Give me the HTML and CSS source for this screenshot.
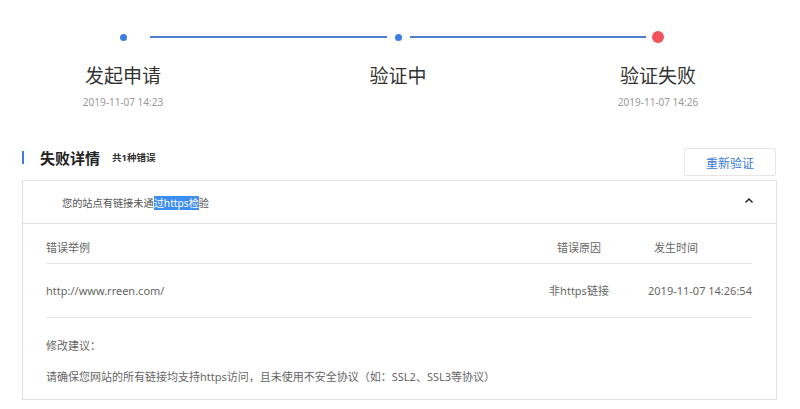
FILE: index.html
```html
<!DOCTYPE html>
<html lang="zh-CN">
<head>
<meta charset="utf-8">
<title>验证失败</title>
<link rel="stylesheet" href="styles.css">
</head>
<body>
<div class="page">
  <section class="steps">
    <div class="track">
      <span class="dot dot-first"></span>
      <span class="line line-a"></span>
      <span class="dot dot-mid"></span>
      <span class="line line-b"></span>
      <span class="dot dot-fail"></span>
    </div>
    <div class="labels">
      <div class="step step-1">
        <div class="step-title">发起申请</div>
        <div class="step-date">2019-11-07 14:23</div>
      </div>
      <div class="step step-2">
        <div class="step-title">验证中</div>
        <div class="step-date"></div>
      </div>
      <div class="step step-3">
        <div class="step-title">验证失败</div>
        <div class="step-date">2019-11-07 14:26</div>
      </div>
    </div>
  </section>

  <section class="detail-head">
    <div class="head-left">
      <span class="bar"></span>
      <span class="head-title">失败详情</span>
      <span class="head-count">共1种错误</span>
    </div>
    <button class="retry">重新验证</button>
  </section>

  <section class="card">
    <div class="card-top">
      <span class="card-msg">您的站点有链接未通<span class="sel">过https检</span>验</span>
      <svg class="chev" width="10" height="7" viewBox="0 0 10 7"><polyline points="1.5,5.5 5,2 8.5,5.5" fill="none" stroke="#222" stroke-width="1.5"/></svg>
    </div>
    <div class="card-body">
      <div class="row row-head">
        <span class="c1">错误举例</span>
        <span class="c2">错误原因</span>
        <span class="c3 c3h">发生时间</span>
      </div>
      <div class="row row-data">
        <span class="c1">http://www.rreen.com/</span>
        <span class="c2">非https链接</span>
        <span class="c3">2019-11-07 14:26:54</span>
      </div>
      <div class="advice">
        <div class="advice-title">修改建议：</div>
        <div class="advice-text">请确保您网站的所有链接均支持https访问，且未使用不安全协议（如：SSL2、SSL3等协议）</div>
      </div>
    </div>
  </section>
</div>
</body>
</html>
```
FILE: styles.css
```css
* { box-sizing: border-box; }
html, body { margin: 0; padding: 0; background: #fff; }
body {
  font-family: "Noto Sans", "Noto Sans CJK SC", sans-serif;
  color: #333;
  width: 800px;
  height: 409px;
  overflow: hidden;
}
.page { padding-top: 31px; }

.track {
  display: flex;
  align-items: center;
  height: 12px;
  padding-left: 120px;
}
.dot { display: block; border-radius: 50%; flex: none; }
.dot-first, .dot-mid { width: 7px; height: 7px; background: #3b7de3; }
.dot-fail { width: 12px; height: 12px; background: #f0545a; }
.line { display: block; height: 1.5px; background: #4f7fcf; flex: none; }
.line-a { width: 237px; margin: 0 8px 0 23px; }
.line-b { width: 236px; margin: 0 6px 0 8px; }

.labels { display: flex; margin-top: 20px; }
.step { width: 160px; text-align: center; flex: none; }
.step-1 { margin-left: 43px; }
.step-2 { margin-left: 115px; }
.step-3 { margin-left: 100px; }
.step-title { font-size: 19px; line-height: 26px; color: #333; }
.step-date { font-size: 10px; line-height: 14px; color: #999; margin-top: 6px; height: 14px; }

.detail-head {
  display: flex;
  justify-content: space-between;
  margin: 37px 24px 0 22px;
  height: 34px;
}
.head-left { display: flex; align-items: center; height: 20px; margin-top: 1px; }
.bar { width: 2px; height: 13px; background: #3b7de3; display: block; }
.head-title { font-size: 15px; font-weight: 700; margin-left: 16px; color: #222; }
.head-count { font-size: 9.5px; font-weight: 700; margin-left: 12px; color: #333; }
.retry {
  width: 92px;
  height: 28px;
  margin-top: 2px;
  background: #fff;
  border: 1px solid #e6e6e6;
  border-radius: 2px;
  color: #3a78d6;
  font-family: "Noto Sans CJK SC", sans-serif;
  font-size: 12px;
  padding: 0;
}

.card {
  margin: 0 23px 0 22px;
  border: 1px solid #e2e2e2;
}
.card-top {
  height: 43px;
  border-bottom: 1px solid #e2e2e2;
  display: flex;
  align-items: center;
  justify-content: space-between;
  padding: 0 22px 0 39px;
}
.card-msg { font-size: 10.2px; color: #555; }
.sel { background: #3d8ef0; color: #fff; }
.chev { display: block; margin-top: -3px; }

.card-body { padding: 0 24px 0 23px; }
.row { display: flex; font-size: 11px; line-height: 16px; color: #666; border-bottom: 1px solid #e6e6e6; }
.row-head { padding: 16px 0 7px; }
.row-data { padding: 19px 0 18px; color: #666; }
.c1 { flex: 1; }
.c2 { width: 100px; text-align: center; margin-right: 19px; }
.c3 { width: 104px; }
.c3h { padding-left: 6px; }

.advice { padding: 20px 0 14px; font-size: 11px; line-height: 16px; color: #666; }
.advice-text { margin-top: 15px; }
```
